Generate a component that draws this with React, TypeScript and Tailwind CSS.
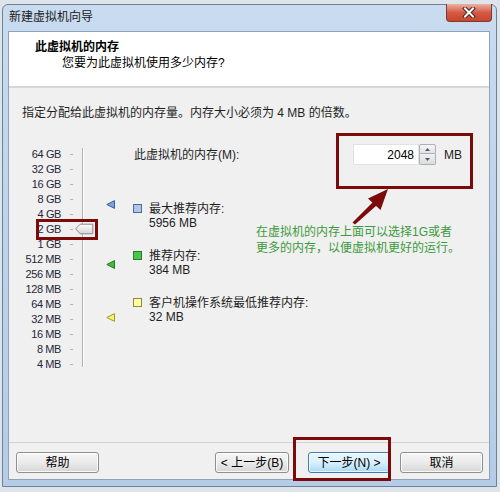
import React from "react";

const scale = [
  "64 GB", "32 GB", "16 GB", "8 GB", "4 GB", "2 GB", "1 GB",
  "512 MB", "256 MB", "128 MB", "64 MB", "32 MB", "16 MB", "8 MB", "4 MB",
];

function Marker({ fill, stroke, className }: { fill: string; stroke: string; className: string }) {
  return (
    <svg width="9" height="9" viewBox="0 0 9 9" className={className}>
      <path d="M0.8 4.5 L8.5 0.6 V8.4 Z" fill={fill} stroke={stroke} strokeWidth="1" strokeLinejoin="round" />
    </svg>
  );
}

function Legend({ box, title, value }: { box: string; title: string; value: string }) {
  return (
    <div className="flex flex-col">
      <div className="flex h-[15px] items-center">
        <div className={`h-[9px] w-[9px] shrink-0 border ${box}`} />
        <span className="ml-[7px] whitespace-nowrap">{title}</span>
      </div>
      <div className="h-[15px] pl-[16px] leading-[15px]">{value}</div>
    </div>
  );
}

function Button({ children, focused }: { children: React.ReactNode; focused?: boolean }) {
  return (
    <div
      className={
        focused
          ? "flex h-[21px] w-[82px] items-center justify-center rounded-[3px] border border-[#3c7fb1] bg-gradient-to-b from-[#eaf6fd] via-[#d9f0fc] to-[#a7d9f5] text-[12px] text-black shadow-[inset_0_0_0_1px_rgba(255,255,255,0.7)]"
          : "flex h-[21px] items-center justify-center rounded-[3px] border border-[#8e8f8f] bg-gradient-to-b from-[#f6f6f6] via-[#ebebeb] to-[#d6d6d6] text-[12px] text-black shadow-[inset_0_0_0_1px_rgba(255,255,255,0.8)]"
      }
    >
      {children}
    </div>
  );
}

export default function App() {
  return (
    <div className="relative h-[492px] w-[500px] overflow-hidden bg-[#dfe4ea] pl-[2px] pt-[4px] font-['Liberation_Sans','Noto_Sans_CJK_SC',sans-serif] text-[12px] text-[#1e1e1e]">
      {/* window */}
      <div className="flex h-[483px] w-[495px] flex-col rounded-t-[6px] border border-[#6d819a] bg-gradient-to-b from-[#c9dcef] via-[#bdd3ea] to-[#b4cce6] px-[4px] pb-[6px]">
        {/* title bar */}
        <div className="flex h-[26px] items-start justify-between">
          <div className="pl-[2px] pt-[4px] leading-[16px] text-[#1a1a1a]">新建虚拟机向导</div>
          <div className="-mt-px flex h-[18px] w-[46px] items-center justify-center rounded-b-[4px] border border-t-0 border-[#7f3a30] bg-gradient-to-b from-[#eab2a5] via-[#d45a44] to-[#c8452c]">
            <svg width="14" height="11" viewBox="0 0 14 11">
              <path d="M3 1.5 L11 9.5 M11 1.5 L3 9.5" stroke="#4a2520" strokeWidth="4" strokeLinecap="square" />
              <path d="M3 1.5 L11 9.5 M11 1.5 L3 9.5" stroke="#ffffff" strokeWidth="2" strokeLinecap="square" />
            </svg>
          </div>
        </div>

        {/* client */}
        <div className="ml-[1px] flex h-[449px] w-[482px] flex-col border border-[#8fa2b8] bg-[#f0f0f0]">
          {/* header */}
          <div className="h-[56px] border-b-2 border-[#d6d6d6] bg-white pl-[26px] pt-[7px] leading-[16px]">
            <div className="font-bold text-black">此虚拟机的内存</div>
            <div className="pl-[27px] text-black">您要为此虚拟机使用多少内存?</div>
          </div>

          {/* body */}
          <div className="h-[354px] pl-[13px] pt-[17px]">
            <div className="leading-[16px]">指定分配给此虚拟机的内存量。内存大小必须为 4 MB 的倍数。</div>

            <div className="-ml-[13px] mt-[24px] flex">
              {/* scale labels */}
              <div className="w-[52px] pt-[2px] text-right text-[11px] tracking-[-0.4px] text-[#262638]">
                {scale.map((s) => (
                  <div key={s} className="h-[15px] leading-[15px]">
                    {s}
                  </div>
                ))}
              </div>
              {/* ticks */}
              <div className="ml-[9px] w-[3px] pt-[2px]">
                {scale.map((s) => (
                  <div key={s} className="flex h-[15px] items-center">
                    <div className="h-px w-[3px] bg-[#b4b4b4]" />
                  </div>
                ))}
              </div>
              {/* track */}
              <div className="relative h-[225px] w-[22px]">
                <div className="ml-[9px] mt-[3px] h-[219px] w-[2px] border-l border-[#b0b0b0] bg-white" />
                <svg width="19" height="12" viewBox="0 0 19 12" className="absolute left-[2px] top-[78px]">
                  <defs>
                    <linearGradient id="thumb" x1="0" y1="0" x2="0" y2="1">
                      <stop offset="0" stopColor="#ffffff" />
                      <stop offset="1" stopColor="#d4d4d4" />
                    </linearGradient>
                  </defs>
                  <path d="M0.7 5.8 L5.2 1.2 H17.8 V10.8 H5.2 Z" fill="url(#thumb)" stroke="#8a8a8a" strokeWidth="1" strokeLinejoin="round" />
                </svg>
              </div>
              {/* markers */}
              <div className="ml-[11px] flex w-[9px] flex-col">
                <Marker fill="#7ea4dc" stroke="#36609e" className="mt-[55px]" />
                <Marker fill="#3cc03c" stroke="#237a23" className="mt-[51px]" />
                <Marker fill="#f4f070" stroke="#a49c20" className="mt-[44px]" />
              </div>

              {/* right column */}
              <div className="ml-[18px] flex flex-col">
                <div className="-mt-px flex h-[21px] items-center">
                  <div className="w-[220px] pl-px">此虚拟机的内存(M):</div>
                  <div className="flex h-[21px] w-[66px] items-center justify-end border border-[#e2e2e2] bg-white pr-[4px] text-black">
                    2048
                  </div>
                  <div className="flex h-[21px] w-[17px] flex-col">
                    <div className="flex h-[10px] items-center justify-center rounded-t-[2px] border border-[#a8b0bc] bg-gradient-to-b from-[#f6f6f6] to-[#e2e2e2]">
                      <svg width="5" height="3" viewBox="0 0 5 3">
                        <path d="M0 3 L2.5 0 L5 3 Z" fill="#4a5a78" />
                      </svg>
                    </div>
                    <div className="flex h-[11px] items-center justify-center rounded-b-[2px] border border-t-0 border-[#a8b0bc] bg-gradient-to-b from-[#f0f0f0] to-[#dcdcdc]">
                      <svg width="5" height="3" viewBox="0 0 5 3">
                        <path d="M0 0 L2.5 3 L5 0 Z" fill="#4a5a78" />
                      </svg>
                    </div>
                  </div>
                  <div className="ml-[8px]">MB</div>
                </div>

                <div className="flex">
                  <div className="flex w-[123px] flex-col pt-[36px]">
                    <Legend box="border-[#4c6a9a] bg-[#b2c7e6]" title="最大推荐内存:" value="5956 MB" />
                    <div className="mt-[17px]">
                      <Legend box="border-[#2b7a2b] bg-[#48c848]" title="推荐内存:" value="384 MB" />
                    </div>
                    <div className="mt-[17px]">
                      <Legend box="border-[#8a8a34] bg-[#ffffa4]" title="客户机操作系统最低推荐内存:" value="32 MB" />
                    </div>
                  </div>
                  <div className="mt-[59px] leading-[16px] text-[#3c9a3c]">
                    <div>在虚拟机的内存上面可以选择1G或者</div>
                    <div>更多的内存，以便虚拟机更好的运行。</div>
                  </div>
                </div>
              </div>
            </div>
          </div>

          {/* footer */}
          <div className="flex h-[37px] items-start border-t border-[#d5d5d5] pl-[7px] pr-[6px] pt-[9px]">
            <div className="w-[83px]">
              <Button>帮助</Button>
            </div>
            <div className="ml-auto w-[74px]">
              <Button>&lt; 上一步(B)</Button>
            </div>
            <div className="ml-[19px]">
              <Button focused>下一步(N) &gt;</Button>
            </div>
            <div className="ml-[10px] w-[83px]">
              <Button>取消</Button>
            </div>
          </div>
        </div>
      </div>

      {/* annotations */}
      <svg width="500" height="492" viewBox="0 0 500 492" className="pointer-events-none absolute left-0 top-0">
        <g fill="none" stroke="#7d0a0a" strokeWidth="3">
          <rect x="37.5" y="220.5" width="59" height="18" />
          <rect x="337.5" y="134.5" width="134" height="53" />
          <rect x="294.5" y="438.5" width="95" height="41" />
        </g>
        <path d="M352.5 222.5 L355 224.5 L376.5 205.5 L373 202 Z" fill="#7d0a0a" />
        <path d="M388 189 L368 198.5 L380.5 210 Z" fill="#7d0a0a" />
      </svg>
    </div>
  );
}
